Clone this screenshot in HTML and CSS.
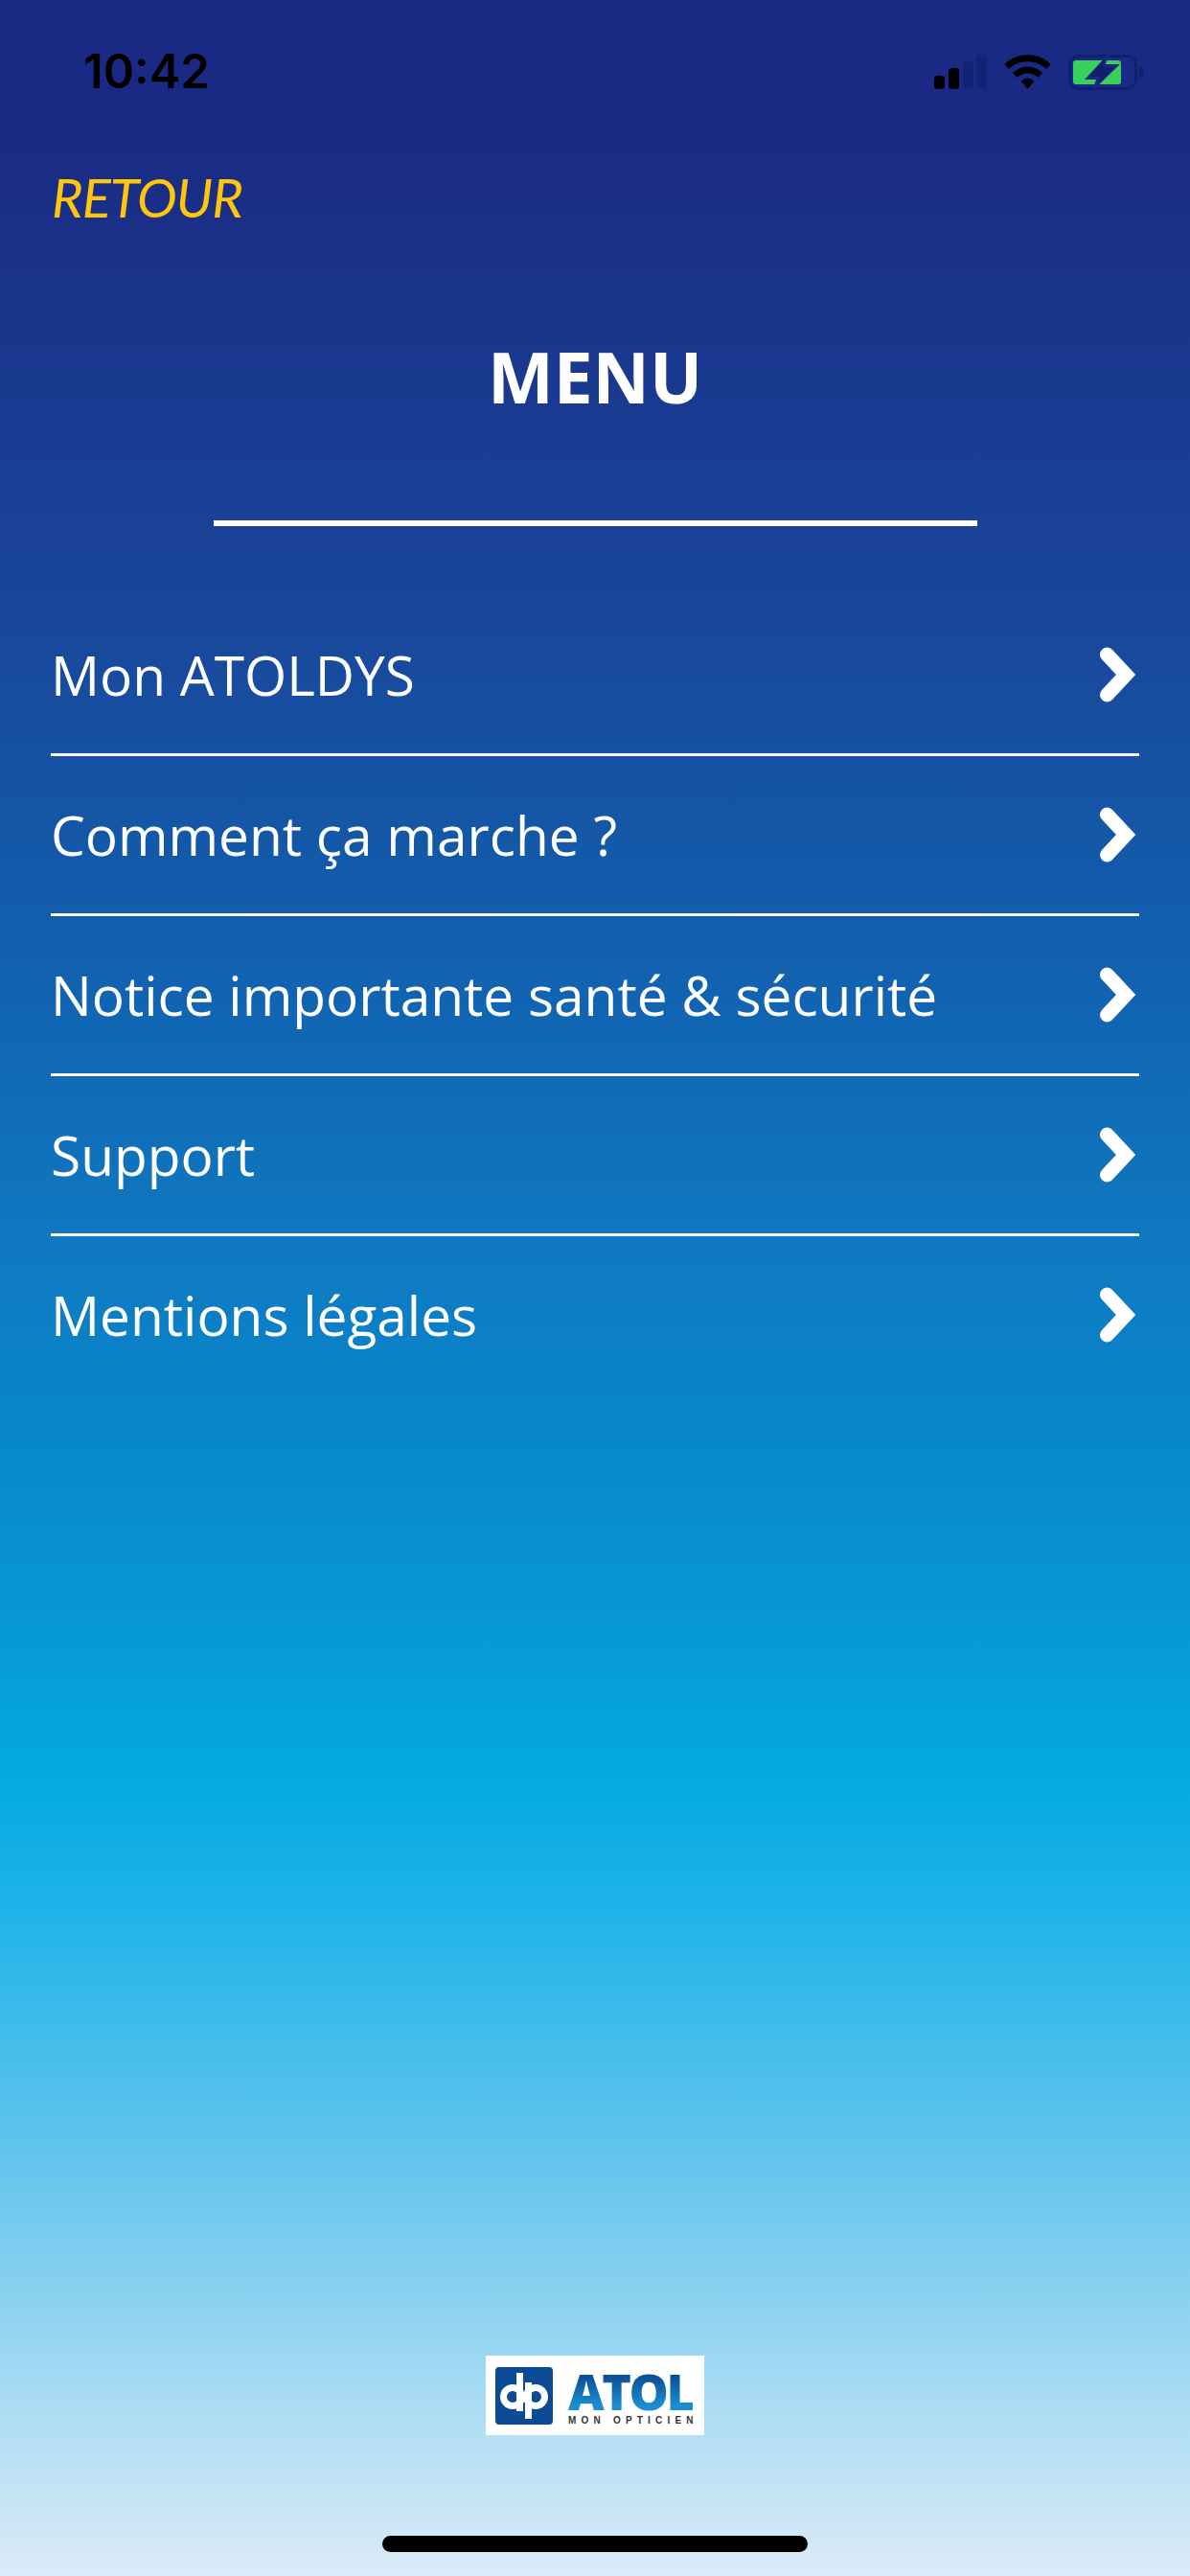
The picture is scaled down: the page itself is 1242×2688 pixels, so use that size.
FILE: index.html
```html
<!DOCTYPE html>
<html lang="fr">
<head>
    <meta charset="UTF-8">
    <meta name="viewport" content="width=device-width, initial-scale=1.0">
    <title>Menu</title>
    <link rel="stylesheet" href="styles.css">
</head>
<body>
    <div class="screen">
        <div class="status-bar">
            <span class="status-time">10:42</span>
            <div class="status-icons">
                <svg class="icon-signal" width="55" height="36" viewBox="0 0 55 36">
                    <rect x="0" y="22" width="11" height="14" rx="3.500" fill="#000"/>
                    <rect x="15" y="14" width="11" height="22" rx="3.500" fill="#000"/>
                    <rect x="30" y="7" width="11" height="29" rx="3.500" fill="#10206f" opacity=".7"/>
                    <rect x="44" y="0" width="11" height="36" rx="3.500" fill="#10206f" opacity=".7"/>
                </svg>
                <svg class="icon-wifi" width="49" height="36" viewBox="0 0 50 36">
                    <path d="M25 0C15.500 0 7 3.500 0.500 10L5 15C10.500 9.800 17.500 7 25 7S39.500 9.800 45 15L49.500 10C43 3.500 34.500 0 25 0Z" fill="#000"/>
                    <path d="M25 12.500C19 12.500 13.500 14.800 9.300 19L13.800 24C16.800 21.200 20.800 19.500 25 19.500S33.200 21.200 36.200 24L40.700 19C36.500 14.800 31 12.500 25 12.500Z" fill="#000"/>
                    <path d="M25 25C22.500 25 20 26 18 28L25 36L32 28C30 26 27.500 25 25 25Z" fill="#000"/>
                </svg>
                <svg class="icon-battery" width="80" height="37" viewBox="0 0 80 37">
                    <rect x="1.500" y="1.500" width="69" height="34" rx="9" fill="none" stroke="#10206f" stroke-width="3"/>
                    <path d="M74 12C77 13 79 15.500 79 18.500S77 24 74 25Z" fill="#10206f"/>
                    <rect x="5" y="6" width="50" height="25" rx="3" fill="#39d05c"/>
                    <path d="M42 -1L17 26H29L25 38L54 10H39Z" fill="#1a2a84"/>
                    <path d="M39 3L22 23H33L29 34L48 13H36Z" fill="#10206f"/>
                </svg>
            </div>
        </div>

        <a class="back-link" href="#">RETOUR</a>
        <h1 class="menu-title">MENU</h1>
        <div class="title-rule"></div>

        <ul class="menu-list">
            <li class="menu-item"><span>Mon ATOLDYS</span><svg class="chevron" viewBox="0 0 37 58"><path d="M7.500 8L27 29L7.500 50" /></svg></li>
            <li class="menu-item"><span>Comment ça marche ?</span><svg class="chevron" viewBox="0 0 37 58"><path d="M7.500 8L27 29L7.500 50" /></svg></li>
            <li class="menu-item"><span>Notice importante santé &amp; sécurité</span><svg class="chevron" viewBox="0 0 37 58"><path d="M7.500 8L27 29L7.500 50" /></svg></li>
            <li class="menu-item"><span>Support</span><svg class="chevron" viewBox="0 0 37 58"><path d="M7.500 8L27 29L7.500 50" /></svg></li>
            <li class="menu-item"><span>Mentions légales</span><svg class="chevron" viewBox="0 0 37 58"><path d="M7.500 8L27 29L7.500 50" /></svg></li>
        </ul>

        <div class="logo">
            <svg class="logo-mark" width="60" height="60" viewBox="0 0 60 60">
                <rect width="60" height="60" rx="4" fill="#0b4a94"/>
                <circle cx="18" cy="31" r="9.500" fill="none" stroke="#fff" stroke-width="7"/>
                <circle cx="42" cy="31" r="9.500" fill="none" stroke="#fff" stroke-width="7"/>
                <rect x="22" y="6" width="7" height="40" fill="#fff"/>
                <rect x="31" y="16" width="7" height="38" fill="#fff"/>
            </svg>
            <div class="logo-text">
                <span class="logo-name">ATOL</span>
                <span class="logo-sub">MON OPTICIEN</span>
            </div>
        </div>

        <div class="home-indicator"></div>
    </div>
</body>
</html>
```

FILE: styles.css
```css
html, body {
    margin: 0;
    padding: 0;
}

body {
    font-family: "Open Sans", Arial, sans-serif;
    color: #ffffff;
}

.screen {
    width: 1242px;
    height: 2688px;
    display: flex;
    flex-direction: column;
    align-items: center;
    overflow: hidden;
    background: linear-gradient(180deg, #1a2a84 0%, #1a2a84 5%, #19479a 24%, #125ead 36%, #0f78c0 48%, #0888cc 56%, #0898d4 63%, #04aae2 69%, #1eb3e8 74%, #6cc7ee 85%, #a8dbf3 93%, #dcebf8 100%);
}

.status-bar {
    width: 100%;
    box-sizing: border-box;
    height: 90px;
    padding: 60px 47px 0 87px;
    display: flex;
    justify-content: space-between;
    align-items: center;
    flex-shrink: 0;
}

.status-time {
    font-family: Inter, "Liberation Sans", sans-serif;
    font-size: 49px;
    line-height: 60px;
    font-weight: 600;
    color: #000000;
}

.status-icons {
    display: flex;
    align-items: center;
    gap: 18px;
}

.back-link {
    align-self: flex-start;
    margin: 82px 0 0 54px;
    font-family: Lato, "Open Sans", sans-serif;
    font-size: 56px;
    line-height: 68px;
    font-style: italic;
    letter-spacing: -1px;
    color: #ffc60b;
    text-decoration: none;
}

.menu-title {
    margin: 105px 0 0;
    font-size: 73px;
    line-height: 96px;
    font-weight: 700;
}

.title-rule {
    width: 797px;
    height: 6px;
    margin-top: 102px;
    background: #ffffff;
}

.menu-list {
    width: 1136px;
    margin: 73px 0 0;
    padding: 0;
    list-style: none;
}

.menu-item {
    height: 164px;
    display: flex;
    align-items: center;
    justify-content: space-between;
    border-bottom: 3px solid #ffffff;
    font-size: 56.8px;
}

.menu-item:last-child {
    border-bottom: none;
}

.chevron {
    width: 37px;
    height: 58px;
    margin-right: 4px;
}

.chevron path {
    fill: none;
    stroke: #ffffff;
    stroke-width: 15;
    stroke-linecap: round;
    stroke-linejoin: miter;
}

.logo {
    margin-top: auto;
    width: 228px;
    height: 83px;
    box-sizing: border-box;
    padding: 12px 0 0 10px;
    display: flex;
    gap: 16px;
    background: #ffffff;
}

.logo-mark {
    flex-shrink: 0;
}

.logo-text {
    display: flex;
    flex-direction: column;
    align-items: flex-start;
}

.logo-name {
    font-size: 52px;
    line-height: 50px;
    font-weight: 800;
    letter-spacing: -2.5px;
    background: linear-gradient(180deg, #0b4a94 15%, #1a8ed0 80%);
    -webkit-background-clip: text;
    background-clip: text;
    color: transparent;
}

.logo-sub {
    font-family: "Liberation Sans", sans-serif;
    font-size: 10px;
    line-height: 12px;
    font-weight: 700;
    letter-spacing: 5.2px;
    white-space: nowrap;
    color: #333333;
}

.home-indicator {
    width: 444px;
    height: 17px;
    margin: 105px 0 25px;
    border-radius: 9px;
    background: #000000;
    flex-shrink: 0;
}
```
